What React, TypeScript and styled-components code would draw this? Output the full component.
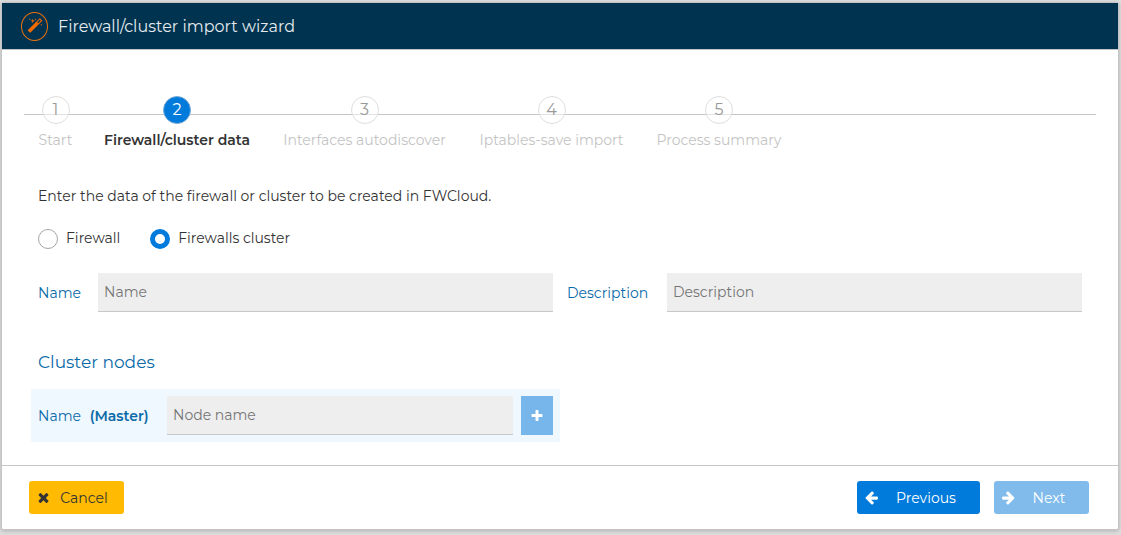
import React, { useState } from "react";
import styled, { createGlobalStyle } from "styled-components";

const GlobalStyle = createGlobalStyle`
  *, *::before, *::after { box-sizing: border-box; }
  body {
    margin: 0;
    background: #dedede;
    color: #333;
    font-family: Montserrat, Inter, "Open Sans", sans-serif;
    font-size: 14px;
    font-weight: 400;
    line-height: 20px;
  }
  button, input { font: inherit; }
`;

const Dialog = styled.section`
  margin: 2px 2px 5px 1px;
  border: 1px solid #c4c4c4;
  border-radius: 2px;
  background: #fff;
  box-shadow: 0 1px 4px rgba(0, 0, 0, 0.2);
`;

const TitleBar = styled.header`
  display: flex;
  align-items: center;
  gap: 10px;
  height: 47px;
  padding: 0 19px;
  border-bottom: 1px solid #c4c4c4;
  background: #003350;
  color: #e4eaee;
`;

const Title = styled.h1`
  margin: 0;
  padding-top: 2px;
  font-size: 16px;
  line-height: 22px;
  font-weight: 400;
`;

const WizardBadge = styled.span`
  display: grid;
  place-items: center;
  width: 27px;
  height: 29px;
  border: 1px solid #e8710f;
  border-radius: 50%;
  color: #f26a00;
`;

const Body = styled.div`
  padding: 46px 22px 23px;
`;

const Steps = styled.ol`
  position: relative;
  display: flex;
  gap: 29px;
  margin: 0;
  padding: 0 14px;
  list-style: none;

  &::before {
    content: "";
    position: absolute;
    top: 18px;
    left: 0;
    right: 0;
    border-top: 1px solid #c4c4c4;
  }
`;

const StepItem = styled.li<{ $width: number }>`
  position: relative;
  display: flex;
  flex-direction: column;
  align-items: center;
  gap: 6px;
  width: ${(p) => p.$width}px;
  white-space: nowrap;
`;

const StepNumber = styled.span<{ $active: boolean }>`
  display: grid;
  place-items: center;
  width: 28px;
  height: 28px;
  border: 1px solid ${(p) => (p.$active ? "#7aaad4" : "#dedede")};
  border-radius: 50%;
  background: ${(p) => (p.$active ? "#007bdb" : "rgba(255, 255, 255, 0.5)")};
  color: ${(p) => (p.$active ? "#fff" : "#999")};
  font-size: 16px;
  font-weight: 400;
`;

const StepLabel = styled.span<{ $active: boolean }>`
  color: ${(p) => (p.$active ? "#333" : "#c4c4c4")};
  font-weight: ${(p) => (p.$active ? 600 : 400)};
`;

const Intro = styled.p`
  margin: 36px 14px 0;
`;

const Choices = styled.div`
  display: flex;
  gap: 30px;
  margin: 22px 14px 0;
`;

const Choice = styled.label`
  display: flex;
  align-items: flex-start;
  gap: 8px;
`;

const Radio = styled.input`
  appearance: none;
  width: 20px;
  height: 20px;
  margin: 1px 0 0;
  border: 1px solid #a6a6a6;
  border-radius: 50%;
  background: #fff;

  &:checked {
    border: 5px solid #007bdb;
  }
`;

const Columns = styled.div`
  display: grid;
  grid-template-columns: 1fr 1fr;
  margin: 17px 7px 0;
`;

const Field = styled.div<{ $tinted?: boolean }>`
  display: flex;
  align-items: center;
  padding: 7px;
  background: ${(p) => (p.$tinted ? "#eff7ff" : "transparent")};
`;

const FieldLabel = styled.label<{ $width: number }>`
  flex: none;
  width: ${(p) => p.$width}px;
  color: #0a6aa8;
  white-space: nowrap;

  strong {
    margin-left: 5px;
    font-weight: 600;
  }
`;

const TextInput = styled.input`
  flex: 1;
  min-width: 0;
  height: 39px;
  padding: 0 6px;
  border: 0;
  border-bottom: 1px solid #c8c8c8;
  border-radius: 0;
  background: #eee;
  color: #333;

  &::placeholder { color: #757575; opacity: 1; }
`;

const SectionTitle = styled.h2`
  margin: 33px 14px 17px;
  color: #0a6aa8;
  font-size: 17px;
  font-weight: 400;
`;

const NodeGrid = styled(Columns)`
  margin-top: 0;
`;

const AddButton = styled.button`
  display: grid;
  place-items: center;
  width: 32px;
  height: 39px;
  margin-left: 8px;
  padding: 0;
  border: 0;
  background: #77b6ea;
  color: #fff;
`;

const Footer = styled.footer`
  display: flex;
  gap: 14px;
  padding: 15px 29px 15px 27px;
  border-top: 1px solid #c4c4c4;
`;

const tones = {
  warning: { background: "#ffba01", color: "#333" },
  primary: { background: "#007bdb", color: "#fff" },
  muted: { background: "#80bbec", color: "#fff" },
};

const ActionButton = styled.button<{ $tone: keyof typeof tones; $wide?: boolean }>`
  display: flex;
  align-items: center;
  width: ${(p) => (p.$wide ? 123 : 95)}px;
  height: 33px;
  padding: 0 7px;
  border: 0;
  border-radius: 3px;
  background: ${(p) => tones[p.$tone].background};
  color: ${(p) => tones[p.$tone].color};

  span { flex: 1; text-align: center; }
`;

const Spacer = styled.div`
  flex: 1;
`;

const paths = {
  magic:
    "M1254 581l293-293-107-107-293 293zm447-293q0 27-18 45l-1286 1286q-18 18-45 18t-45-18l-198-198q-18-18-18-45t18-45l1286-1286q18-18 45-18t45 18l198 198q18 18 18 45zm-1351-190l98 30-98 30-30 98-30-98-98-30 98-30 30-98zm350 162l196 60-196 60-60 196-60-196-196-60 196-60 60-196zm930 478l98 30-98 30-30 98-30-98-98-30 98-30 30-98zm-640-640l98 30-98 30-30 98-30-98-98-30 98-30 30-98z",
  times:
    "M1490 1322q0 40-28 68l-136 136q-28 28-68 28t-68-28l-294-294-294 294q-28 28-68 28t-68-28l-136-136q-28-28-28-68t28-68l294-294-294-294q-28-28-28-68t28-68l136-136q28-28 68-28t68 28l294 294 294-294q28-28 68-28t68 28l136 136q28 28 28 68t-28 68l-294 294 294 294q28 28 28 68z",
  plus:
    "M1600 736v192q0 40-28 68t-68 28h-416v416q0 40-28 68t-68 28h-192q-40 0-68-28t-28-68v-416h-416q-40 0-68-28t-28-68v-192q0-40 28-68t68-28h416v-416q0-40 28-68t68-28h192q40 0 68 28t28 68v416h416q40 0 68 28t28 68z",
  arrow:
    "M1664 896v128q0 53-32.5 90.5t-84.5 37.5h-704l293 294q38 36 38 90t-38 90l-75 76q-37 37-90 37-52 0-91-37l-651-652q-37-37-37-90 0-52 37-91l651-650q38-38 91-38 52 0 90 38l75 74q38 38 38 91t-38 91l-293 293h704q52 0 84.5 37.5t32.5 90.5z",
};

function Icon({ name, size = 15, flip = false }: { name: keyof typeof paths; size?: number; flip?: boolean }) {
  return (
    <svg width={size} height={size} viewBox="0 0 1792 1792" fill="currentColor" aria-hidden="true">
      <path d={paths[name]} transform={flip ? "translate(1792 0) scale(-1 1)" : undefined} />
    </svg>
  );
}

const steps = [
  { label: "Start", width: 35 },
  { label: "Firewall/cluster data", width: 150 },
  { label: "Interfaces autodiscover", width: 167 },
  { label: "Iptables-save import", width: 149 },
  { label: "Process summary", width: 128 },
];

export default function App() {
  const [kind, setKind] = useState("cluster");
  const current = 1;

  return (
    <>
      <GlobalStyle />
      <Dialog aria-labelledby="wizard-title">
        <TitleBar>
          <WizardBadge>
            <Icon name="magic" size={16} />
          </WizardBadge>
          <Title id="wizard-title">Firewall/cluster import wizard</Title>
        </TitleBar>
        <Body>
          <Steps>
            {steps.map((step, i) => (
              <StepItem key={step.label} $width={step.width} aria-current={i === current ? "step" : undefined}>
                <StepNumber $active={i === current}>{i + 1}</StepNumber>
                <StepLabel $active={i === current}>{step.label}</StepLabel>
              </StepItem>
            ))}
          </Steps>
          <Intro>Enter the data of the firewall or cluster to be created in FWCloud.</Intro>
          <Choices role="radiogroup" aria-label="Type">
            <Choice>
              <Radio type="radio" name="kind" checked={kind === "firewall"} onChange={() => setKind("firewall")} />
              Firewall
            </Choice>
            <Choice>
              <Radio type="radio" name="kind" checked={kind === "cluster"} onChange={() => setKind("cluster")} />
              Firewalls cluster
            </Choice>
          </Choices>
          <Columns>
            <Field>
              <FieldLabel htmlFor="name" $width={60}>Name</FieldLabel>
              <TextInput id="name" placeholder="Name" />
            </Field>
            <Field>
              <FieldLabel htmlFor="description" $width={100}>Description</FieldLabel>
              <TextInput id="description" placeholder="Description" />
            </Field>
          </Columns>
          <SectionTitle>Cluster nodes</SectionTitle>
          <NodeGrid>
            <Field $tinted>
              <FieldLabel htmlFor="node" $width={129}>
                Name <strong>(Master)</strong>
              </FieldLabel>
              <TextInput id="node" placeholder="Node name" />
              <AddButton type="button" aria-label="Add node">
                <Icon name="plus" size={14} />
              </AddButton>
            </Field>
          </NodeGrid>
        </Body>
        <Footer>
          <ActionButton type="button" $tone="warning">
            <Icon name="times" />
            <span>Cancel</span>
          </ActionButton>
          <Spacer />
          <ActionButton type="button" $tone="primary" $wide>
            <Icon name="arrow" />
            <span>Previous</span>
          </ActionButton>
          <ActionButton type="button" $tone="muted">
            <Icon name="arrow" flip />
            <span>Next</span>
          </ActionButton>
        </Footer>
      </Dialog>
    </>
  );
}
